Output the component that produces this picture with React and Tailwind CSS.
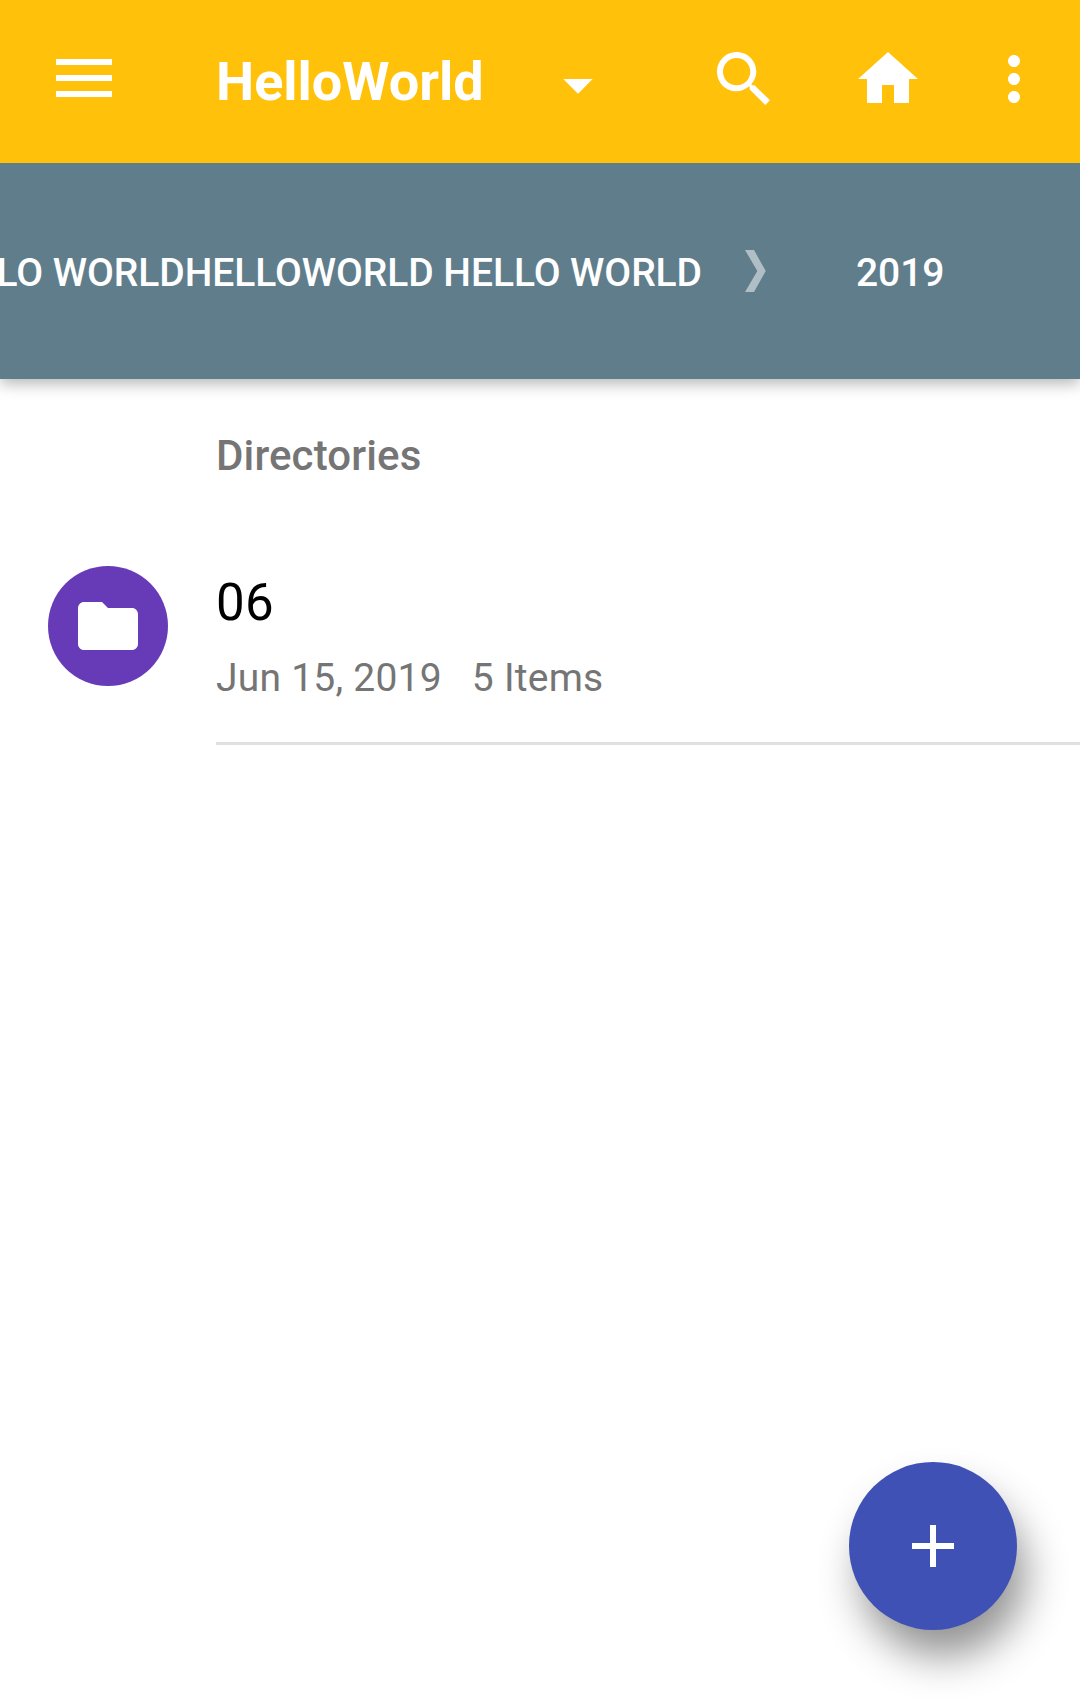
function Icon({ d, className }) {
  return (
    <svg viewBox="0 0 24 24" className={className} fill="currentColor" aria-hidden="true">
      <path d={d} />
    </svg>
  );
}

function TopBar() {
  return (
    <header className="flex h-[163px] items-start bg-[#ffc10a] text-white">
      <button className="mt-[59px] ml-14 flex w-14 flex-col gap-2.5" aria-label="Menu">
        <span className="h-1.5 w-full bg-white" />
        <span className="h-1.5 w-full bg-white" />
        <span className="h-1.5 w-full bg-white" />
      </button>
      <h1 className="mt-[50px] ml-[104px] w-[326px] text-[54px] leading-[64px] font-bold whitespace-nowrap">
        HelloWorld
      </h1>
      <Icon className="mt-[49px] size-[72px]" d="M7.1 10l4.9 4.9 4.9-4.9z" />
      <nav className="mt-[43px] ml-[94px] flex">
        <Icon
          className="size-[72px]"
          d="M15.5 14.1h-.79l-.28-.37C15.41 12.59 16.1 11.11 16.1 9.55 16.1 5.93 13.17 3 9.55 3S3 5.93 3 9.55s2.93 6.55 6.55 6.55c1.61 0 3.04-.69 4.18-1.67l.17.28v.79l5.2 5.17 1.57-1.57-5.17-5zm-5.95 0C7.04 14.1 5 12.06 5 9.55S7.04 5 9.55 5s4.55 2.04 4.55 4.55-2.04 4.55-4.55 4.55z"
        />
        <Icon className="ml-[72px] size-[72px]" d="M10 20v-6h4v6h5v-8h3L12 3 2 12h3v8z" />
        <Icon
          className="ml-[54px] size-[72px]"
          d="M12 8c1.1 0 2-.9 2-2s-.9-2-2-2-2 .9-2 2 .9 2 2 2zm0 2c-1.1 0-2 .9-2 2s.9 2 2 2 2-.9 2-2-.9-2-2-2zm0 6c-1.1 0-2 .9-2 2s.9 2 2 2 2-.9 2-2-.9-2-2-2z"
        />
      </nav>
    </header>
  );
}

function Breadcrumbs() {
  return (
    <div className="flex h-[216px] items-start overflow-hidden bg-[#607d8b] text-[39px] leading-[46px] font-medium whitespace-nowrap text-white">
      <div className="mt-[87px] flex w-[702px] shrink-0 justify-end tracking-[-0.07px]">
        <span>HELLO WORLDHELLOWORLD HELLO WORLD</span>
      </div>
      <svg viewBox="0 0 21 42" className="mt-[87px] ml-[43px] h-[42px] w-[21px] text-[#b0bec5]" fill="currentColor">
        <path d="M0 0h9l11.7 21L9 42H0l12.3-21z" />
      </svg>
      <span className="mt-[87px] ml-[90px] tracking-[-0.1px]">2019</span>
    </div>
  );
}

function DirectoryRow() {
  return (
    <div className="mt-[64px] flex">
      <div className="mt-[22px] ml-12 flex size-[120px] items-center justify-center rounded-full bg-[#673ab7] text-white">
        <Icon className="size-[72px]" d="M10 4H4c-1.1 0-1.99.9-1.99 2L2 18c0 1.1.9 2 2 2h16c1.1 0 2-.9 2-2V8c0-1.1-.9-2-2-2h-8l-2-2z" />
      </div>
      <div className="ml-12 h-[201px] flex-1 border-b-3 border-[#e0e0e0]">
        <div className="mt-[29px] text-[51px] leading-[60px] tracking-[0.3px] text-black">06</div>
        <div className="mt-[22px] flex gap-[30px] text-[39px] leading-[46px] tracking-[0.23px] text-[#757575]">
          <span>Jun 15, 2019</span>
          <span>5 Items</span>
        </div>
      </div>
    </div>
  );
}

export default function App() {
  return (
    <div className="relative h-[1699px] w-[1080px] overflow-hidden bg-white font-['Roboto',sans-serif]">
      <div className="shadow-[0_5px_14px_0_rgba(0,0,0,0.28)]">
        <TopBar />
        <Breadcrumbs />
      </div>
      <main>
        <h2 className="mt-[53px] ml-[216px] text-[42px] leading-[48px] font-medium tracking-[0.13px] text-[#757575]">Directories</h2>
        <DirectoryRow />
      </main>
      <button
        aria-label="Add"
        className="absolute right-[63px] bottom-[69px] flex size-[168px] items-center justify-center rounded-full bg-[#3f51b5] text-white shadow-[10px_28px_42px_-2px_rgba(0,0,0,0.43)]"
      >
        <Icon className="size-[72px]" d="M19 13h-6v6h-2v-6H5v-2h6V5h2v6h6v2z" />
      </button>
    </div>
  );
}
